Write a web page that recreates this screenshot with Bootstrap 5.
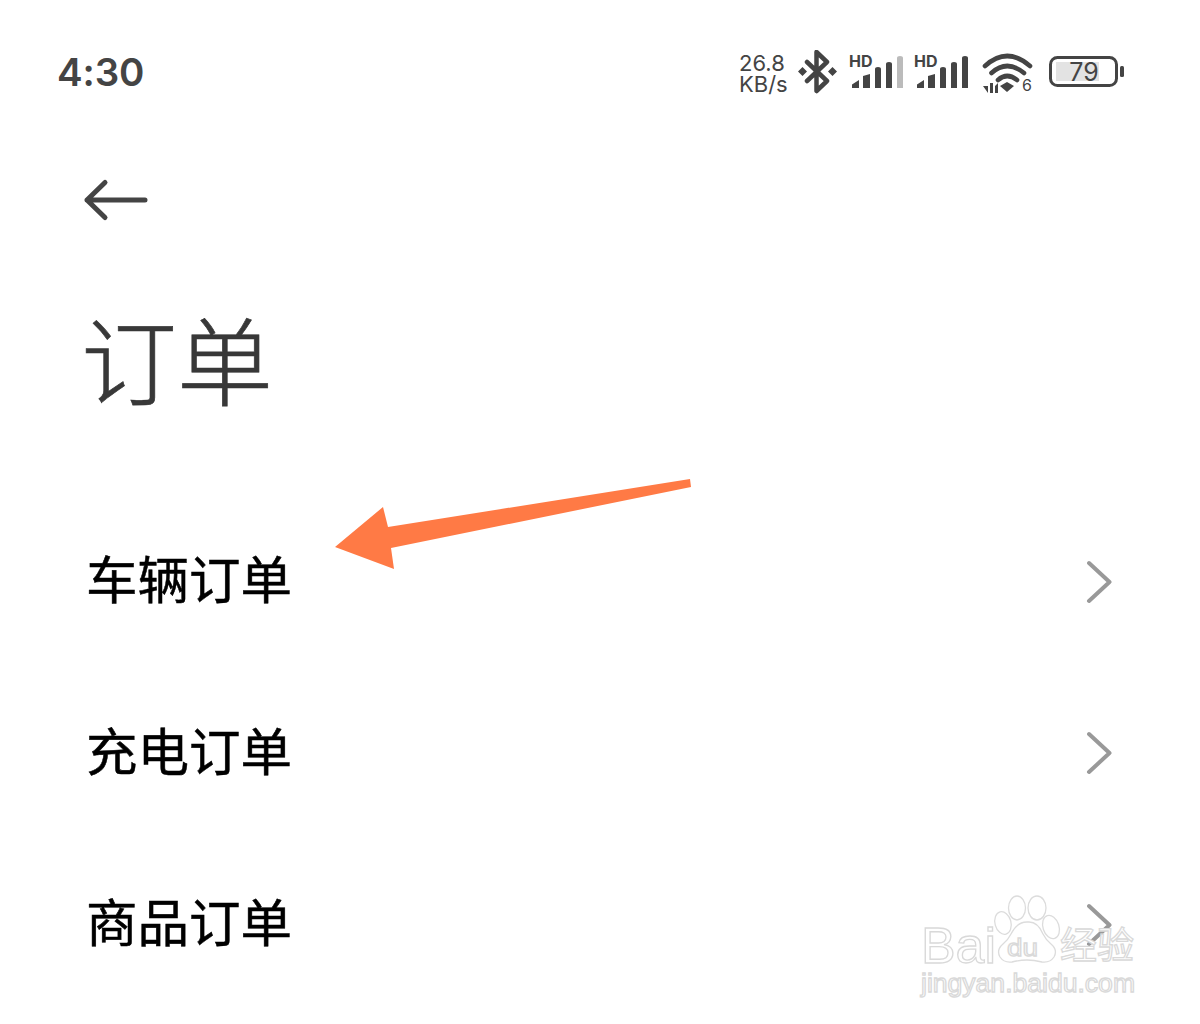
<!doctype html>
<html lang="zh">
<head>
<meta charset="utf-8">
<title>订单</title>
<link href="https://cdn.jsdelivr.net/npm/bootstrap@5.3.0/dist/css/bootstrap.min.css" rel="stylesheet">
<style>
html,body{background:#fff;overflow:hidden}
.phone{position:relative;width:1200px;height:1024px;font-family:"Noto Sans CJK SC",sans-serif;color:#000}
.status-row{height:144px;padding:50px 76px 0 57px;color:#444}
.clock{font-family:Inter,"Liberation Sans",sans-serif;font-weight:600;font-size:38.500px;line-height:45px;letter-spacing:-.1px;color:#444}
.speed{font-family:Inter,"Liberation Sans",sans-serif;font-size:22px;line-height:21px;width:47px;margin:3px 12px 0 0;color:#444;white-space:nowrap}
.gap-hd{margin-left:11px}
.gap-hd2{margin-left:9px}
.gap-wifi{margin-left:12px}
.gap-batt{margin-left:15px}
.back-btn{margin:28px 0 0 83px;height:56px;display:block}
.page-title{margin:74px 0 0 81px;font-size:96px;line-height:110px;font-weight:300;letter-spacing:0;color:#383838;-webkit-text-stroke:.7px #383838;font-family:"Noto Sans CJK SC",sans-serif}
.order-list{margin-top:84px}
.order-row{height:171.5px;padding:0 88px 0 86px;border:0;background:transparent}
.order-name{font-size:51.500px;line-height:60px;font-weight:400;color:#000;-webkit-text-stroke:.5px #000;padding-bottom:9px}
.overlay-art{position:absolute;left:0;top:0;pointer-events:none}
.wm-text{font-family:"Liberation Sans",sans-serif;fill:#fff;stroke:#d9d9d9;stroke-width:1.3}
.wm-cjk{font-family:"Noto Sans CJK SC",sans-serif;fill:#fff;stroke:#d9d9d9;stroke-width:1.3}
.icon-txt{font-family:Inter,"Liberation Sans",sans-serif;fill:#444}
</style>
</head>
<body class="m-0">
<div class="phone">
  <div class="status-row d-flex justify-content-between align-items-start">
    <div class="clock">4:30</div>
    <div class="d-flex align-items-start">
      <div class="speed">26.8<br>KB/s</div>
      <svg width="40" height="44" viewBox="0 0 40 44"><path d="M9 12 29 31 18.500 41V2L29 12 9 31" fill="none" stroke="#444" stroke-width="4.500" stroke-linejoin="round" stroke-linecap="round"/><path d="M0 21.500 4.500 17 9 21.500 4.500 26ZM30 21.500 34.500 17 39 21.500 34.500 26Z" fill="#444"/></svg>
      <svg class="gap-hd" width="56" height="40" viewBox="0 0 56 40"><text class="icon-txt" x="0" y="17" font-size="16" font-weight="700">HD</text><path d="M3 38v-3.500L10 30v8Z M14 38V26l7-2v14Z M26 38V19q0-2 3-2t3 2v19Z M37 38V14q0-2 3-2t3 2v24Z" fill="#444"/><path d="M48 38V8q0-2 3-2t3 2v30Z" fill="#bbb"/></svg>
      <svg class="gap-hd2" width="56" height="40" viewBox="0 0 56 40"><text class="icon-txt" x="0" y="17" font-size="16" font-weight="700">HD</text><path d="M3 38v-3.500L10 30v8Z M14 38V26l7-2v14Z M26 38V19q0-2 3-2t3 2v19Z M37 38V14q0-2 3-2t3 2v24Z M48 38V8q0-2 3-2t3 2v30Z" fill="#444"/></svg>
      <svg class="gap-wifi" width="52" height="44" viewBox="0 0 52 44"><path d="M3 16Q25-4 48 16M9.500 23Q25 9 42 23M16 30Q25 22 35 30" fill="none" stroke="#444" stroke-width="4.600" stroke-linecap="round"/><path d="M18 36 25 32 32 36 25 42Z" fill="#444"/><path d="M1 36H6V43ZM8 43V33H11V43ZM13 36 16 33V43H13Z" fill="#444"/><text class="icon-txt" x="40" y="41" font-size="16">6</text></svg>
      <svg class="gap-batt" width="75" height="40" viewBox="0 0 75 40"><rect x="1.500" y="7.500" width="66" height="28" rx="7" fill="#fff" stroke="#444" stroke-width="3"/><rect x="7" y="12" width="43" height="19" fill="#e3e3e3"/><text class="icon-txt" x="35" y="31" font-size="25" text-anchor="middle">79</text><rect x="71" y="16" width="4" height="11" rx="1.500" fill="#444"/></svg>
    </div>
  </div>
  <svg class="back-btn" width="66" height="46" viewBox="0 0 66 46" aria-label="返回"><path d="M22 5.500 4 23 22 40.500M4 23H62" fill="none" stroke="#444" stroke-width="5" stroke-linecap="round" stroke-linejoin="round"/></svg>
  <h1 class="page-title">订单</h1>
  <div class="order-list list-group list-group-flush">
    <div class="order-row list-group-item d-flex justify-content-between align-items-center"><span class="order-name">车辆订单</span><svg width="26" height="44" viewBox="0 0 26 44"><path d="M3 3 23.500 22 3 41" fill="none" stroke="#999" stroke-width="4" stroke-linecap="round" stroke-linejoin="round"/></svg></div>
    <div class="order-row list-group-item d-flex justify-content-between align-items-center"><span class="order-name">充电订单</span><svg width="26" height="44" viewBox="0 0 26 44"><path d="M3 3 23.500 22 3 41" fill="none" stroke="#999" stroke-width="4" stroke-linecap="round" stroke-linejoin="round"/></svg></div>
    <div class="order-row list-group-item d-flex justify-content-between align-items-center"><span class="order-name">商品订单</span><svg width="26" height="44" viewBox="0 0 26 44"><path d="M3 3 23.500 22 3 41" fill="none" stroke="#999" stroke-width="4" stroke-linecap="round" stroke-linejoin="round"/></svg></div>
  </div>
  <svg class="overlay-art" width="1200" height="1024" viewBox="0 0 1200 1024">
    <polygon points="335,547 383,507 388,527 690,479 691,487 391,548 394,569" fill="#ff7a45"/>
    <g fill="#fff" fill-opacity=".75" stroke="#dcdcdc" stroke-width="1.300">
      <ellipse cx="1003" cy="923" rx="8" ry="11.500" transform="rotate(-15 1003 923)"/>
      <ellipse cx="1017" cy="908" rx="8.500" ry="12"/>
      <ellipse cx="1037" cy="908" rx="9" ry="12"/>
      <ellipse cx="1051" cy="927" rx="8" ry="12" transform="rotate(-18 1051 927)"/>
      <path d="M1027 922q-10 0-16 12-3 6-8 10-7 6-3 13 4 6 12 5 8-2 15-2t15 2q8 1 12-5 4-7-3-13-5-4-8-10-5-12-14-12Z"/>
    </g>
    <text class="wm-text" x="921" y="963" font-size="50" textLength="75" lengthAdjust="spacingAndGlyphs">Bai</text>
    <text class="wm-text" x="1007" y="956" font-size="23" textLength="31" lengthAdjust="spacingAndGlyphs">du</text>
    <text class="wm-cjk" x="1060" y="959" font-size="37" textLength="74" lengthAdjust="spacingAndGlyphs">经验</text>
    <text class="wm-text" x="921" y="992" font-size="25" textLength="214" lengthAdjust="spacingAndGlyphs">jingyan.baidu.com</text>
  </svg>
</div>
<script src="https://cdn.jsdelivr.net/npm/bootstrap@5.3.0/dist/js/bootstrap.bundle.min.js"></script>
</body>
</html>
